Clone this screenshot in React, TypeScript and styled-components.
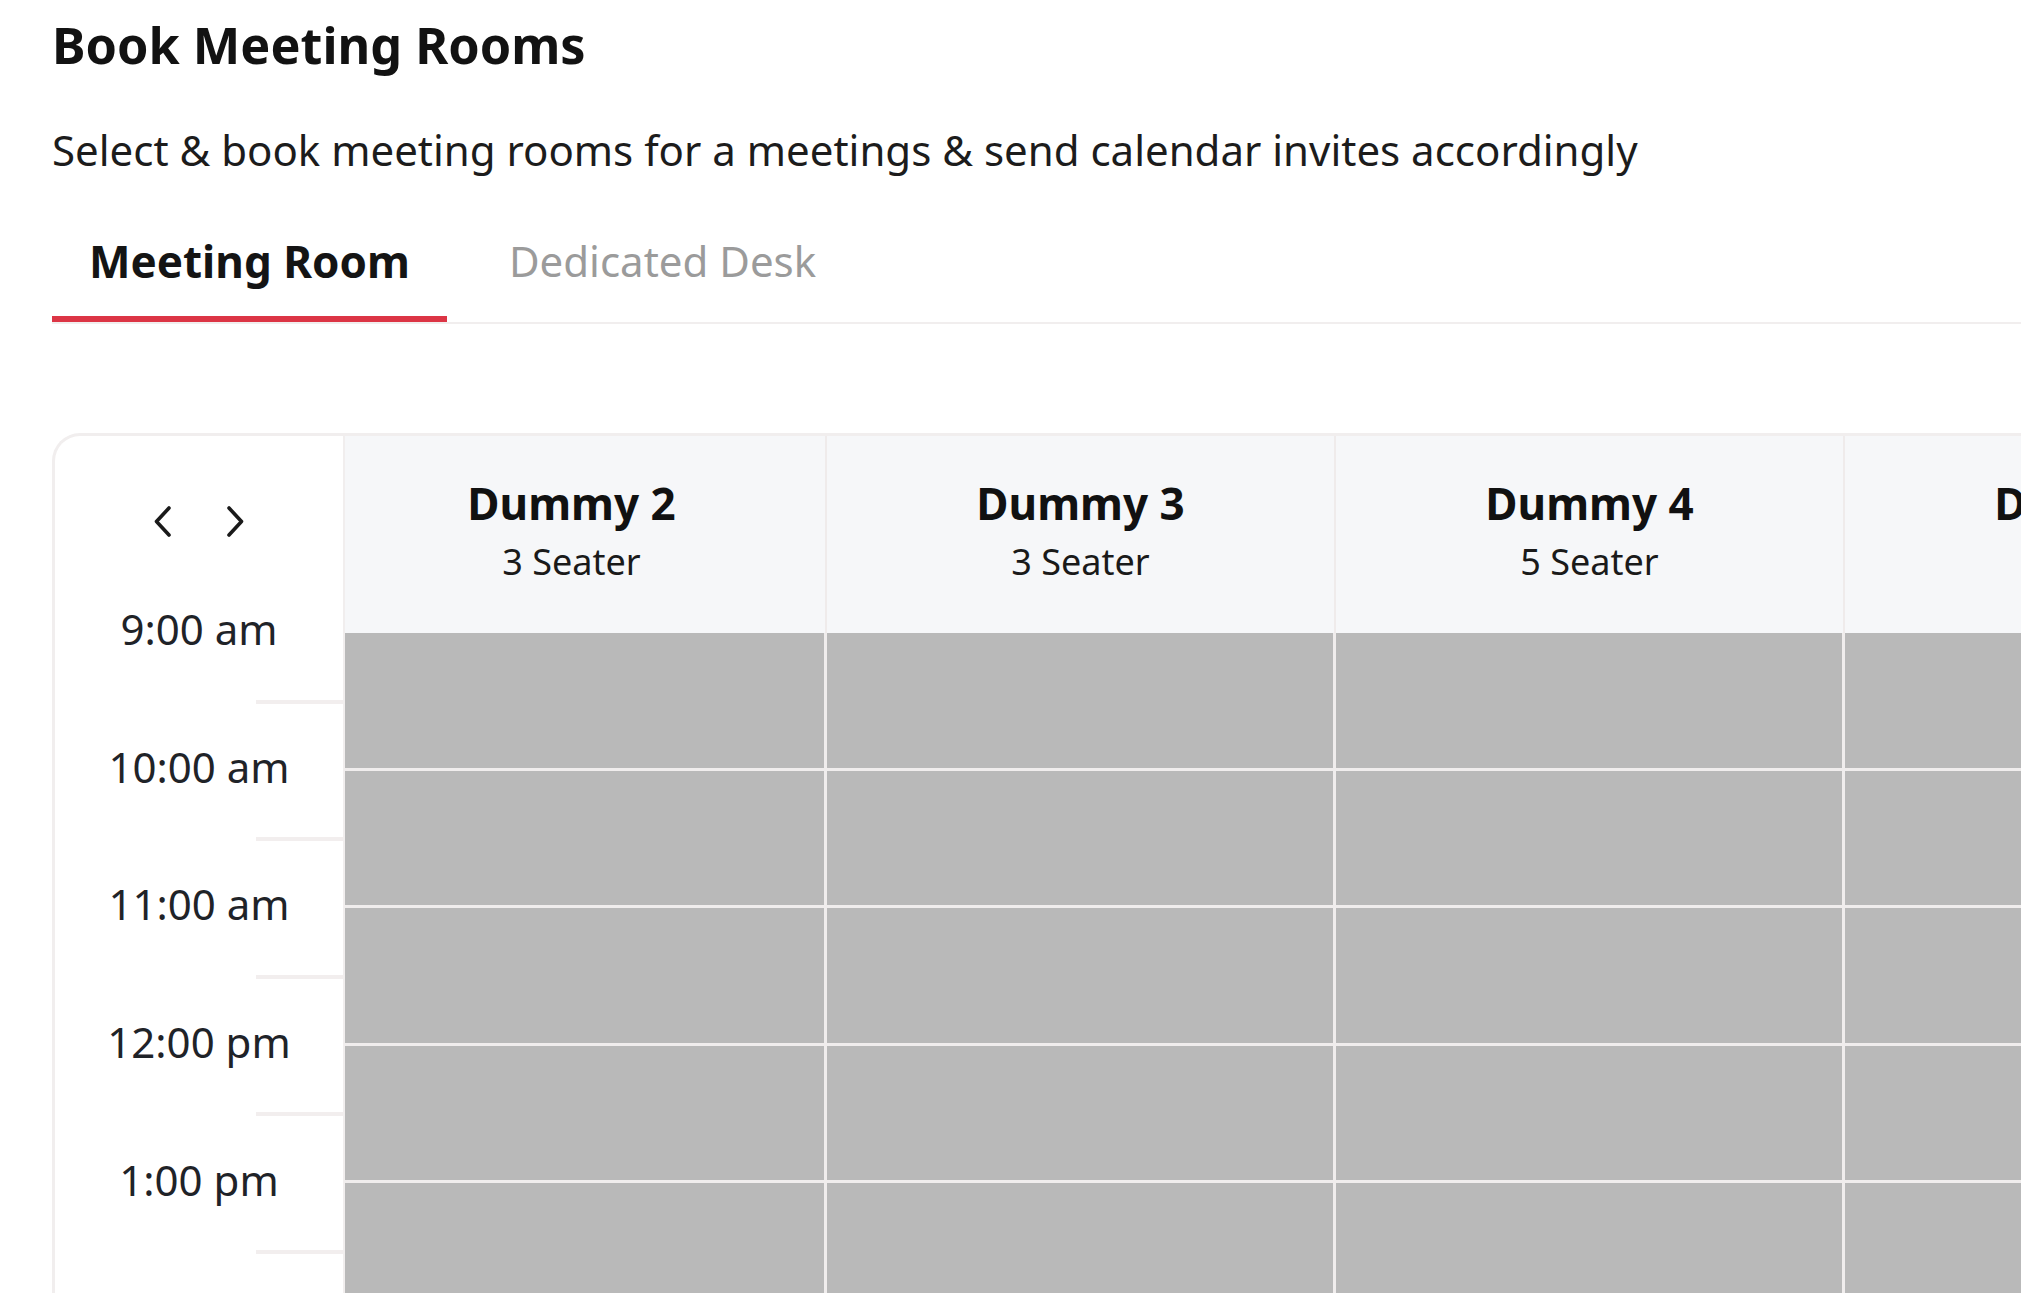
import React from "react";
import styled, { createGlobalStyle } from "styled-components";

const GlobalStyle = createGlobalStyle`
  html, body {
    margin: 0;
    padding: 0;
    background: #ffffff;
    overflow: hidden;
  }
  body {
    font-family: "Noto Sans", "Open Sans", "Liberation Sans", sans-serif;
    color: #161616;
  }
  * { box-sizing: border-box; }
`;

const Page = styled.div`
  padding: 11px 0 0 52px;
  width: max-content;
  min-width: 100vw;
`;

const Title = styled.h1`
  margin: 0;
  font-size: 50.4px;
  line-height: 68px;
  font-weight: 700;
  color: #121212;
`;

const Subtitle = styled.p`
  margin: 42px 0 0 0;
  font-size: 42px;
  line-height: 57px;
  font-weight: 400;
  color: #1c1c1c;
`;

const TabBar = styled.div`
  display: flex;
  gap: 25px;
  width: 1969px;
  margin-top: 30px;
  border-bottom: 2px solid #f1eeee;
`;

const Tab = styled.button<{ $active?: boolean }>`
  appearance: none;
  background: none;
  border: none;
  margin: 0;
  padding: 0 37px 3px 37px;
  height: 114px;
  font-family: inherit;
  font-size: ${(p) => (p.$active ? 44 : 42)}px;
  font-weight: ${(p) => (p.$active ? 700 : 400)};
  color: ${(p) => (p.$active ? "#141414" : "#9b9b9b")};
  border-bottom: 6px solid ${(p) => (p.$active ? "#dc3545" : "transparent")};
  cursor: pointer;
  line-height: 1;
`;

const Card = styled.div`
  display: flex;
  margin-top: 109px;
  width: max-content;
  background: #ffffff;
  border: 3px solid #f1eeee;
  border-right: none;
  border-bottom: none;
  border-top-left-radius: 28px;
  overflow: hidden;
`;

const TimeColumn = styled.div`
  width: 290px;
  flex: none;
  display: flex;
  flex-direction: column;
  border-right: 2px solid #f1eeee;
`;

const NavArea = styled.div`
  height: 130px;
  display: flex;
  justify-content: center;
  align-items: flex-start;
  gap: 50px;
  padding-top: 69px;
`;

const NavButton = styled.button`
  appearance: none;
  background: none;
  border: none;
  padding: 0;
  margin: 0;
  width: 22px;
  height: 33px;
  display: flex;
  cursor: pointer;
  color: #1a1a1a;
`;

const TimeSlot = styled.div`
  height: 137.6px;
  flex: none;
  display: flex;
  flex-direction: column;
`;

const TimeLabel = styled.div`
  flex: 1;
  display: flex;
  align-items: center;
  justify-content: center;
  padding-bottom: 8px;
  font-size: 42px;
  color: #1f2328;
  white-space: nowrap;
`;

const Tick = styled.div`
  align-self: flex-end;
  width: 87px;
  height: 4px;
  background: #f2eeee;
`;

const RoomColumn = styled.div<{ $width: number }>`
  width: ${(p) => p.$width}px;
  flex: none;
  display: flex;
  flex-direction: column;
`;

const RoomHeader = styled.div<{ $shift: number }>`
  height: 197px;
  background: #f6f7f9;
  border-right: 2px solid #efebeb;
  display: flex;
  flex-direction: column;
  align-items: center;
  padding-top: 37px;
  padding-right: ${(p) => p.$shift}px;
`;

const RoomName = styled.div`
  font-size: 44px;
  line-height: 60px;
  font-weight: 700;
  color: #111111;
  white-space: nowrap;
`;

const RoomSeats = styled.div`
  margin-top: 5px;
  font-size: 36px;
  line-height: 48px;
  color: #1a1a1a;
  white-space: nowrap;
`;

const Cell = styled.div`
  height: 137.6px;
  flex: none;
  background: #b9b9b9;
  border-right: 3px solid #f0eded;
  border-bottom: 3px solid #f0eded;
`;

const Chevron = ({ dir }: { dir: "left" | "right" }) => (
  <svg width="22" height="33" viewBox="0 0 22 33" fill="none">
    <polyline
      points={dir === "left" ? "17,3 4.5,16.5 17,30" : "5,3 17.5,16.5 5,30"}
      stroke="currentColor"
      strokeWidth="3.6"
      strokeLinecap="round"
      strokeLinejoin="round"
    />
  </svg>
);

const times = ["9:00 am", "10:00 am", "11:00 am", "12:00 pm", "1:00 pm"];

const rooms = [
  { name: "Dummy 2", seats: "3 Seater" },
  { name: "Dummy 3", seats: "3 Seater" },
  { name: "Dummy 4", seats: "5 Seater" },
  { name: "Dummy 5", seats: "4 Seater" },
];

export default function App() {
  return (
    <>
      <GlobalStyle />
      <Page>
        <Title>Book Meeting Rooms</Title>
        <Subtitle>
          Select &amp; book meeting rooms for a meetings &amp; send calendar invites accordingly
        </Subtitle>
        <TabBar>
          <Tab $active>Meeting Room</Tab>
          <Tab>Dedicated Desk</Tab>
        </TabBar>
        <Card>
          <TimeColumn>
            <NavArea>
              <NavButton aria-label="Previous">
                <Chevron dir="left" />
              </NavButton>
              <NavButton aria-label="Next">
                <Chevron dir="right" />
              </NavButton>
            </NavArea>
            {times.map((t) => (
              <TimeSlot key={t}>
                <TimeLabel>{t}</TimeLabel>
                <Tick />
              </TimeSlot>
            ))}
          </TimeColumn>
          {rooms.map((r, i) => (
            <RoomColumn key={r.name} $width={i === 0 ? 482 : 509}>
              <RoomHeader $shift={i === 0 ? 27 : 0}>
                <RoomName>{r.name}</RoomName>
                <RoomSeats>{r.seats}</RoomSeats>
              </RoomHeader>
              {times.map((t) => (
                <Cell key={t} />
              ))}
            </RoomColumn>
          ))}
        </Card>
      </Page>
    </>
  );
}
